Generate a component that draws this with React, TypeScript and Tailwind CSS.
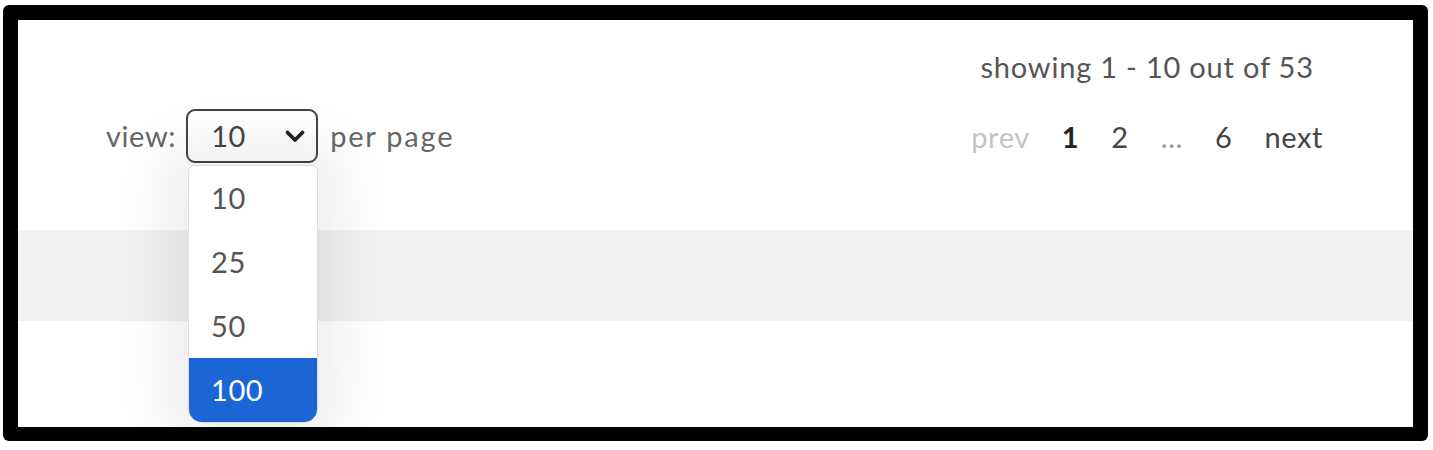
import React from "react";

export default function App() {
  const items = ["10", "25", "50", "100"];
  return (
    <div className="w-[1433px] h-[450px] bg-white pt-[5px] pl-[3px]" style={{ fontFamily: "Lato, 'Open Sans', sans-serif" }}>
      <div className="w-[1425px] h-[436px] bg-black rounded-[6px] pt-[15px] pl-[15px]">
        <div className="relative w-[1395px] h-[407px] bg-white flex flex-col overflow-hidden">
          <div className="h-[210px] flex justify-between pl-[88px] pr-[90px]">
            <div className="pt-[89px] flex items-start">
              <div className="flex items-center h-[54px] text-[29px] tracking-[0.6px] text-[#666]">
                <span>view:</span>
                <div className="relative ml-[10px] mr-[12px]">
                  <div className="w-[132px] h-[54px] border-2 border-[#444] rounded-[9px] flex items-center justify-between pl-[23px] pr-[9px] text-[#444]">
                    <span>10</span>
                    <svg width="24" height="24" viewBox="0 0 24 24" fill="none" stroke="#222" strokeWidth="3.8" strokeLinecap="round" strokeLinejoin="round">
                      <path d="M4.5 8.5l7.5 7.5 7.5-7.5" />
                    </svg>
                  </div>
                </div>
                <span className="tracking-[1.8px]">per page</span>
              </div>
            </div>
            <div className="flex flex-col items-center pt-[28px]">
              <div className="text-[29px] tracking-[0.8px] text-[#555] h-[38px] leading-[38px]">showing 1 - 10 out of 53</div>
              <div className="mt-[32px] flex items-center gap-[32px] text-[29px] tracking-[0.6px] h-[38px] leading-[38px]">
                <span className="text-[#c4c4c4]">prev</span>
                <span className="text-[#222] font-bold">1</span>
                <span className="text-[#444]">2</span>
                <span className="text-[#999]">...</span>
                <span className="text-[#444]">6</span>
                <span className="text-[#444]">next</span>
              </div>
            </div>
          </div>
          <div className="h-[91px] bg-[#f1f1f1]" />
          <div className="flex-1 bg-white" />
          <div className="absolute left-[170px] top-[145px] w-[130px] h-[258px] bg-white rounded-t-[6px] rounded-b-[14px] shadow-[0_0_60px_20px_rgba(0,0,0,0.08)] border border-[#ddd] overflow-hidden">
            {items.map((it) => (
              <div
                key={it}
                className={
                  it === "100"
                    ? "h-[64px] flex items-center pl-[22px] text-[29px] tracking-[0.6px] bg-[#1b66d4] text-white"
                    : "h-[64px] flex items-center pl-[22px] text-[29px] tracking-[0.6px] text-[#555]"
                }
              >
                {it}
              </div>
            ))}
          </div>
        </div>
      </div>
    </div>
  );
}
